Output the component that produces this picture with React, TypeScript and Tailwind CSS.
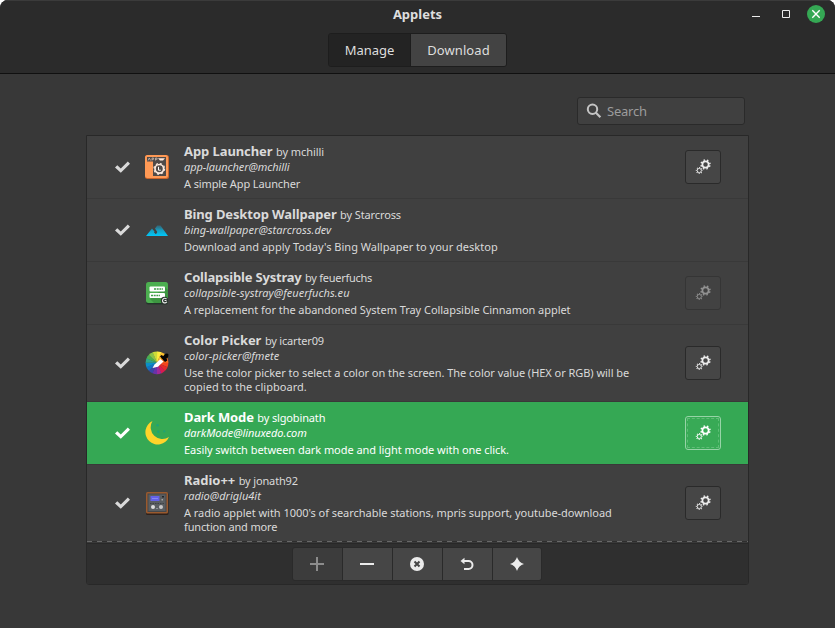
import type { ReactNode } from "react";

type Applet = {
  name: string;
  author: string;
  uuid: string;
  lines: { text: string; track: string }[];
  nameTrack: string;
  authorTrack: string;
  uuidTrack: string;
  icon: ReactNode;
  enabled: boolean;
  settings: "on" | "off" | "none";
  selected?: boolean;
};

function LauncherIcon() {
  return (
    <svg width="24" height="24" viewBox="0 0 24 24">
      <rect width="24" height="24" rx="2.5" fill="#c9652c" />
      <rect width="23" height="23" rx="2.5" fill="#ff9955" />
      <path d="M2 2h19v4.500H2z" fill="#504a48" />
      <path d="M8 6h13v15H8z" fill="#504a48" />
      <path d="M3 5.500L4.300 3 5.600 5.500M7 5.500V3h1.600v1.300H7M10.500 5.500V3h1.600v1.300h-1.600" stroke="#d8c6ba" strokeWidth="0.700" fill="none" />
      <path d="M13 3.200h7L18 5.500h-3z" fill="#ffe9dc" />
      <circle cx="14.300" cy="13.800" r="4.300" fill="#504a48" stroke="#fbe9dd" strokeWidth="1.700" />
      <circle cx="14.300" cy="13.800" r="5.300" fill="none" stroke="#fbe9dd" strokeWidth="1.200" strokeDasharray="2.100 2.060" />
      <path d="M13.500 11.800v3.400h2.300" stroke="#fff" strokeWidth="1" fill="none" />
    </svg>
  );
}

function MountainIcon() {
  return (
    <svg width="24" height="24" viewBox="0 0 24 24">
      <defs>
        <linearGradient id="peak" x1="0" y1="0" x2="0" y2="1">
          <stop offset="0" stopColor="#2b7d96" stopOpacity="0.600" />
          <stop offset="0.450" stopColor="#169fc2" />
          <stop offset="1" stopColor="#00c8fa" />
        </linearGradient>
      </defs>
      <path d="M1 18L7 10.500 9.500 13.500 9 14.500 11 16.200 12.300 14 10 10.500 12.200 7.500H15.500L23 18Z" fill="url(#peak)" />
    </svg>
  );
}

function TrayIcon() {
  return (
    <svg width="24" height="24" viewBox="0 0 24 24">
      <rect x="1" y="2" width="22" height="21.500" rx="2.500" fill="#24342a" />
      <rect x="1" y="1" width="22" height="21" rx="2.500" fill="#4caf50" />
      <path d="M20 6l3 3v11a2 2 0 0 1-2 2H9l-4-4z" fill="#3d9641" />
      <rect x="4.500" y="5.500" width="15.500" height="5" rx="1" fill="#fff" />
      <rect x="4.500" y="12" width="15.500" height="5" rx="1" fill="#fff" />
      <path d="M9 8h9" stroke="#3f9d48" strokeWidth="1.600" strokeDasharray="2 0.700" />
      <path d="M6 14.500h9" stroke="#3f9d48" strokeWidth="1.600" strokeDasharray="2 0.700" />
      <circle cx="19.500" cy="19.500" r="3.700" fill="#29322d" />
      <path d="M21.500 18a2.300 2.300 0 1 0 .3 2.700M19.500 19.500h2" stroke="#e8e8e8" strokeWidth="1.200" fill="none" />
    </svg>
  );
}

const WHEEL = [
  "#ffeb3b", "#fdc02f", "#fb8c00", "#fb6a1c", "#f4431f", "#e52a2a",
  "#d81b50", "#a02a9a", "#6a32a8", "#3a46a8", "#1173c4", "#0a90c8",
  "#2fa58a", "#4caf50", "#8cc34a", "#cddc39",
];

function PickerIcon() {
  const step = (Math.PI * 2) / WHEEL.length;
  const cy = 11.8;
  const r = 11.4;
  return (
    <svg width="24" height="24" viewBox="0 0 24 24">
      {WHEEL.map((color, i) => {
        const a = i * step - Math.PI / 2;
        const b = a + step + 0.02;
        return (
          <path
            key={color}
            d={`M12 ${cy}L${12 + r * Math.cos(a)} ${cy + r * Math.sin(a)}A${r} ${r} 0 0 1 ${12 + r * Math.cos(b)} ${cy + r * Math.sin(b)}Z`}
            fill={color}
          />
        );
      })}
      <path d="M7.500 17L9.500 13.500 15.500 8 18.500 10.500 13 15.800Z" fill="#fff" />
      <path d="M15 5.500L16.300 4 18.300 5 20 3Q22.500 1.700 23.500 3.500 24 5.500 21.500 7.500L22.300 9.500 20 11Z" fill="#050505" />
    </svg>
  );
}

function MoonIcon() {
  return (
    <svg width="24" height="24" viewBox="0 0 24 24">
      <path d="M7.500 0A12.300 12.300 0 1 0 24 16A11.750 11.750 0 0 1 7.500 0Z" fill="#ffd42a" />
      <g fill="#16a085" opacity="0.750">
        <circle cx="12.500" cy="4.200" r="1.200" />
        <circle cx="13.300" cy="10.800" r="1.200" />
        <circle cx="19.300" cy="10.300" r="1.100" />
      </g>
    </svg>
  );
}

function RadioIcon() {
  return (
    <svg width="24" height="24" viewBox="0 0 24 24">
      <rect x="1" y="2" width="22.500" height="22" rx="1.500" fill="#2c211c" />
      <rect x="1" y="1" width="22" height="21.500" rx="1.500" fill="#9a5a2e" />
      <rect x="2.500" y="2.500" width="19" height="18.500" fill="#45474a" />
      <rect x="3.500" y="3.500" width="17" height="16.500" fill="#5a5e61" />
      <rect x="5.500" y="5" width="9" height="5" fill="#6461e8" />
      <path d="M7 7.500h6" stroke="#8586f5" strokeWidth="1" />
      <rect x="17" y="5" width="2" height="1.500" fill="#25272a" />
      <rect x="16.500" y="8" width="1.500" height="1.500" fill="#a5a5a5" />
      <path d="M5 12.500h14" stroke="#3e4145" strokeWidth="1" strokeDasharray="1.500 1" />
      <circle cx="8" cy="16" r="2" fill="#dcdcdc" />
      <circle cx="16" cy="16" r="2" fill="#c8c8c8" />
      <path d="M11 17.500h2" stroke="#8f9398" strokeWidth="1" />
    </svg>
  );
}

const APPLETS: Applet[] = [
  {
    name: "App Launcher", nameTrack: "tracking-[-0.08px]",
    author: "by mchilli", authorTrack: "tracking-[-0.09px]",
    uuid: "app-launcher@mchilli", uuidTrack: "tracking-[-0.08px]",
    lines: [{ text: "A simple App Launcher", track: "tracking-[-0.12px]" }],
    icon: <LauncherIcon />, enabled: true, settings: "on",
  },
  {
    name: "Bing Desktop Wallpaper", nameTrack: "tracking-[-0.13px]",
    author: "by Starcross", authorTrack: "tracking-[-0.12px]",
    uuid: "bing-wallpaper@starcross.dev", uuidTrack: "tracking-[0.02px]",
    lines: [{ text: "Download and apply Today's Bing Wallpaper to your desktop", track: "tracking-[0.01px]" }],
    icon: <MountainIcon />, enabled: true, settings: "none",
  },
  {
    name: "Collapsible Systray", nameTrack: "tracking-[-0.2px]",
    author: "by feuerfuchs", authorTrack: "tracking-[-0.28px]",
    uuid: "collapsible-systray@feuerfuchs.eu", uuidTrack: "tracking-[0.04px]",
    lines: [{ text: "A replacement for the abandoned System Tray Collapsible Cinnamon applet", track: "tracking-[-0.05px]" }],
    icon: <TrayIcon />, enabled: false, settings: "off",
  },
  {
    name: "Color Picker", nameTrack: "tracking-[-0.05px]",
    author: "by icarter09", authorTrack: "tracking-[-0.18px]",
    uuid: "color-picker@fmete", uuidTrack: "tracking-[0.05px]",
    lines: [
      { text: "Use the color picker to select a color on the screen. The color value (HEX or RGB) will be", track: "tracking-[-0.04px]" },
      { text: "copied to the clipboard.", track: "tracking-[0.03px]" },
    ],
    icon: <PickerIcon />, enabled: true, settings: "on",
  },
  {
    name: "Dark Mode", nameTrack: "tracking-[-0.12px]",
    author: "by slgobinath", authorTrack: "tracking-[-0.15px]",
    uuid: "darkMode@linuxedo.com", uuidTrack: "tracking-[-0.07px]",
    lines: [{ text: "Easily switch between dark mode and light mode with one click.", track: "tracking-[-0.05px]" }],
    icon: <MoonIcon />, enabled: true, settings: "on", selected: true,
  },
  {
    name: "Radio++", nameTrack: "tracking-[-0.03px]",
    author: "by jonath92", authorTrack: "tracking-[-0.15px]",
    uuid: "radio@driglu4it", uuidTrack: "tracking-[0px]",
    lines: [
      { text: "A radio applet with 1000's of searchable stations, mpris support, youtube-download", track: "tracking-[-0.04px]" },
      { text: "function and more", track: "tracking-[-0.15px]" },
    ],
    icon: <RadioIcon />, enabled: true, settings: "on",
  },
];

function CheckIcon() {
  return (
    <svg width="16" height="16" viewBox="0 0 16 16">
      <path d="M0 8.500L2.300 6.200 5.800 9.500 12.800 2.500 15 4.700 5.800 13.800Z" fill="currentColor" />
    </svg>
  );
}

function GearsIcon() {
  return (
    <svg width="16" height="16" viewBox="0 0 16 16" fill="none" stroke="currentColor">
      <circle cx="10.500" cy="5.500" r="3.100" strokeWidth="1.700" />
      <circle cx="10.500" cy="5.500" r="4.500" strokeWidth="1.500" strokeDasharray="1.400 2.134" strokeDashoffset="-1" />
      <circle cx="4.300" cy="11.500" r="2.100" strokeWidth="0.900" />
      <circle cx="4.300" cy="11.500" r="3" strokeWidth="1.100" strokeDasharray="1 1.356" strokeDashoffset="0.500" />
    </svg>
  );
}

function SettingsButton({ off, selected }: { off: boolean; selected: boolean }) {
  const look = selected
    ? "border-[#97d4a7] bg-[#38aa56] text-white"
    : off
      ? "border-[#353535] bg-[#424242] text-[#929292]"
      : "border-[#2a2a2a] bg-[#464646] text-[#ededed]";
  return (
    <button className={`h-[34px] w-9 rounded-[3px] border p-px ${look}`}>
      <span className={`flex h-full items-center justify-center ${selected ? "border border-dashed border-[#5fbd77]" : ""}`}>
        <GearsIcon />
      </span>
    </button>
  );
}

function AppletRow({ applet, last }: { applet: Applet; last: boolean }) {
  const tone = applet.selected ? "bg-[#35a854] text-white" : "text-[#dadada]";
  const line = last ? "" : "border-b border-[#393939]";
  return (
    <li className={`flex items-center pr-[27px] pl-7 ${tone} ${line}`}>
      <span className="w-[30px]">{applet.enabled && <CheckIcon />}</span>
      <span className="w-[39px]">{applet.icon}</span>
      <div className="flex-1 pt-[6px] pb-[7px] text-[11px] leading-[14px] whitespace-nowrap">
        <div className="flex h-[18px] items-baseline gap-[3.5px] leading-[18px]">
          <span className={`text-[13px] font-bold ${applet.nameTrack}`}>{applet.name}</span>
          <span className={applet.authorTrack}>{applet.author}</span>
        </div>
        <div className={`mb-[3px] italic ${applet.uuidTrack}`}>{applet.uuid}</div>
        {applet.lines.map((l) => (
          <div key={l.text} className={l.track}>{l.text}</div>
        ))}
      </div>
      {applet.settings !== "none" && (
        <SettingsButton off={applet.settings === "off"} selected={!!applet.selected} />
      )}
    </li>
  );
}

function ToolButton({ dim, last, children }: { dim?: boolean; last?: boolean; children: ReactNode }) {
  return (
    <button
      className={`flex h-8 items-center justify-center ${dim ? "bg-[#3c3c3c] text-[#8c8c8c]" : "bg-[#464646] text-[#ebebeb]"} ${last ? "w-12" : "w-[50px] border-r border-[#2a2a2a] pr-px"}`}
    >
      <svg width="16" height="16" viewBox="0 0 16 16" fill="none" stroke="currentColor">
        {children}
      </svg>
    </button>
  );
}

export default function App() {
  return (
    <div className="h-[628px] w-[835px] overflow-hidden bg-white font-['Noto_Sans',sans-serif]">
      <div className="flex h-full flex-col overflow-hidden rounded-t-lg bg-[#383838]">
        <header className="h-[74px] border-t border-b border-t-[#3b3b3b] border-b-[#101010] bg-[#2b2b2b]">
          <div className="grid h-7 grid-cols-[1fr_auto_1fr] items-center">
            <span />
            <h1 className="pb-[2px] text-[13px] leading-4 font-bold text-[#dedede]">Applets</h1>
            <div className="flex items-center justify-end gap-[15px] pr-[10px] pb-[2px]">
              <svg width="15" height="18" viewBox="0 0 15 18">
                <path d="M5 11.500h8" stroke="#ececec" />
              </svg>
              <svg width="15" height="18" viewBox="0 0 15 18">
                <path d="M5.500 5.500h7v7h-7z" fill="none" stroke="#ececec" />
              </svg>
              <svg width="18" height="18" viewBox="0 0 18 18">
                <circle cx="9" cy="9" r="9" fill="#35a854" />
                <path d="M5.300 5.300l7.400 7.400M12.700 5.300l-7.400 7.400" stroke="#fff" strokeWidth="1.400" />
              </svg>
            </div>
          </div>
          <nav className="mt-1 ml-[328px] flex h-[34px] w-[179px] overflow-hidden rounded-[3px] border border-[#1d1d1d] text-[13px] text-[#dedede]">
            <button className="w-[82px] border-r border-[#1d1d1d] bg-[#232323] pt-[2px]">Manage</button>
            <button className="flex-1 bg-[#434343] pt-[2px] tracking-[0.08px]">Download</button>
          </nav>
        </header>
        <main className="flex-1 pt-[23px] pr-[86px] pl-[86px]">
          <div className="mr-1 ml-auto flex h-7 w-[168px] items-center rounded-[3px] border border-[#2a2a2a] bg-[#404040] pl-2">
            <svg width="16" height="16" viewBox="0 0 16 16" fill="none" stroke="#c4c4c4">
              <circle cx="6.500" cy="6.300" r="4.700" strokeWidth="2" />
              <path d="M9.700 9.500l4.700 4.700" strokeWidth="2.200" />
            </svg>
            <span className="ml-[5px] pt-[2px] text-[13px] tracking-[-0.22px] text-[#9c9c9c]">Search</span>
          </div>
          <section className="mt-[10px] overflow-hidden rounded-b-[3px] border border-[#282828] bg-[#404040]">
            <ul>
              {APPLETS.map((a, i) => (
                <AppletRow key={a.name} applet={a} last={i === APPLETS.length - 1} />
              ))}
            </ul>
            <div className="h-px bg-[repeating-linear-gradient(90deg,#686868_0_5px,#2e2e2e_5px_10px)]" />
            <div className="h-px bg-[#3a3a3a]" />
            <footer className="flex h-[41px] border-t border-[#282828] bg-[#2f2f2f] pt-[3px] pl-[205px]">
              <div className="flex h-[34px] w-[250px] overflow-hidden rounded-[3px] border border-[#2a2a2a]">
                <ToolButton dim><path d="M1 8h14M8 1v14" strokeWidth="2" /></ToolButton>
                <ToolButton><path d="M1 8h14" strokeWidth="2" /></ToolButton>
                <ToolButton>
                  <circle cx="8" cy="8" r="7" fill="currentColor" stroke="none" />
                  <path d="M5.500 5.500l5 5M10.500 5.500l-5 5" stroke="#464646" strokeWidth="2" />
                </ToolButton>
                <ToolButton>
                  <path d="M4 5h5.500a4 4 0 0 1 0 8H5" strokeWidth="2" />
                  <path d="M1.500 5L5.500 1.700V8.300Z" fill="currentColor" stroke="none" />
                </ToolButton>
                <ToolButton last>
                  <path d="M8 1Q9.700 6.300 15 8 9.700 9.700 8 15 6.300 9.700 1 8 6.300 6.300 8 1Z" fill="currentColor" stroke="none" />
                </ToolButton>
              </div>
            </footer>
          </section>
        </main>
      </div>
    </div>
  );
}
